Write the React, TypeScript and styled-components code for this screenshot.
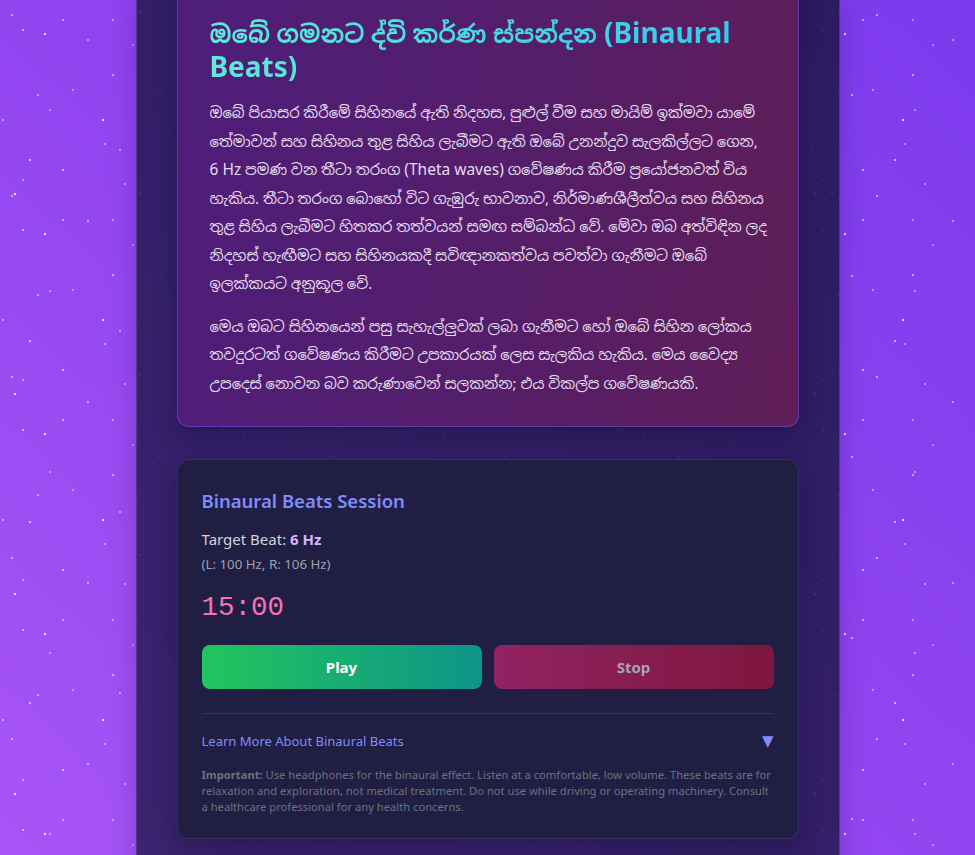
import React from "react";
import styled, { createGlobalStyle } from "styled-components";

const starLayer = (pts: [number, number, number][]) =>
  pts
    .map(
      ([x, y, a]) =>
        `radial-gradient(circle at ${x}px ${y}px, rgba(255,255,255,${a}) 0, rgba(255,255,255,${a}) 1px, transparent 1.6px)`
    )
    .join(",");

const tileA: [number, number, number][] = [
  [23, 30, 0.55], [45, 34, 0.8], [63, 20, 0.5], [113, 20, 0.4], [133, 45, 0.35],
  [113, 75, 0.5], [73, 90, 0.4], [38, 95, 0.5], [3, 120, 0.45], [103, 120, 0.85],
  [105, 144, 0.4], [63, 170, 0.6], [23, 180, 0.45], [125, 184, 0.4], [15, 194, 0.85],
];
const tileB: [number, number, number][] = [
  [12, 15, 0.5], [88, 40, 0.45], [140, 12, 0.7], [50, 110, 0.4], [160, 95, 0.55],
  [120, 150, 0.45], [30, 160, 0.6],
];

const Global = createGlobalStyle`
  html, body { margin: 0; padding: 0; }
  body {
    font-family: "Noto Sans", "Noto Sans Sinhala", "Iskoola Pota", "Open Sans", sans-serif;
    background-color: #8b45ee;
  }
  * { box-sizing: border-box; }
`;

const Page = styled.div`
  min-height: 100vh;
  display: flex;
  justify-content: center;
  overflow: hidden;
  background-image: ${starLayer(tileA)}, ${starLayer(tileB)},
    linear-gradient(to top right, #a855f7 0%, #9346f0 45%, #7c3aed 100%);
  background-size: ${tileA.map(() => "200px 200px").join(",")},
    ${tileB.map(() => "173px 181px").join(",")}, 100% 100%;
`;

const Column = styled.main`
  width: 704px;
  flex: none;
  background: linear-gradient(to top right, rgba(36, 26, 80, 0.82), rgba(30, 22, 75, 0.86));
  border-left: 1px solid rgba(167, 139, 250, 0.25);
  border-right: 1px solid rgba(167, 139, 250, 0.25);
  box-shadow: 0 0 24px rgba(40, 10, 90, 0.25);
  padding: 0 40px 40px;
  display: flex;
  flex-direction: column;
  gap: 32px;
`;

const InfoCard = styled.section`
  margin-top: -17px;
  padding: 32px 10px 29px 32px;
  border-radius: 12px;
  border: 1px solid rgba(99, 102, 241, 0.45);
  background: linear-gradient(100deg, rgba(80, 30, 125, 0.92) 0%, rgba(88, 30, 105, 0.92) 55%, rgba(100, 30, 85, 0.92) 100%);
  box-shadow: 0 10px 25px rgba(10, 5, 30, 0.3);
`;

const Title = styled.h2`
  margin: 0 0 15px;
  font-size: 28px;
  line-height: 33px;
  font-weight: 700;
  background: linear-gradient(to right, #5eead4, #2fc6f0);
  -webkit-background-clip: text;
  background-clip: text;
  color: transparent;
`;

const Si = styled.span<{ $size: number }>`
  font-size: ${(p) => p.$size}px;
`;

const Para = styled.p`
  margin: 0 0 14px;
  font-size: 14.8px;
  line-height: 28.5px;
  color: #e3dcef;
  white-space: nowrap;
  &:last-child { margin-bottom: 0; }
`;

const Lat = styled.span`
  font-size: 15.5px;
`;

const SessionCard = styled.section`
  padding: 27px 24px 23px;
  border-radius: 12px;
  border: 1px solid rgba(139, 92, 246, 0.22);
  background: #201e43;
  box-shadow: 0 10px 25px rgba(10, 5, 30, 0.3);
  display: flex;
  flex-direction: column;
`;

const SessionTitle = styled.h3`
  margin: 0 0 12px;
  font-size: 18.5px;
  line-height: 28px;
  font-weight: 600;
  color: #818cf8;
`;

const Target = styled.div`
  font-size: 15px;
  line-height: 24px;
  color: #d1d5db;
  b { color: #d8b4fe; font-weight: 700; }
`;

const Freqs = styled.div`
  margin-top: 3px;
  font-size: 13.3px;
  line-height: 20px;
  color: #9ca3af;
`;

const Timer = styled.div`
  margin-top: 16px;
  font-family: "Liberation Mono", "DejaVu Sans Mono", monospace;
  font-size: 27.5px;
  line-height: 36px;
  color: #f472b6;
`;

const Buttons = styled.div`
  margin-top: 19px;
  display: grid;
  grid-template-columns: 1fr 1fr;
  gap: 12px;
`;

const Btn = styled.button<{ $variant: "play" | "stop"; $disabled?: boolean }>`
  height: 44px;
  border: none;
  border-radius: 8px;
  font-family: inherit;
  font-size: 15px;
  font-weight: 700;
  color: #fff;
  cursor: pointer;
  opacity: ${(p) => (p.$disabled ? 0.6 : 1)};
  background: ${(p) =>
    p.$variant === "play"
      ? "linear-gradient(to right, #22c55e, #0d9488)"
      : "linear-gradient(to right, #db2777, #be123c)"};
`;

const Divider = styled.hr`
  margin: 24px 0 0;
  border: none;
  border-top: 1px solid rgba(75, 85, 99, 0.45);
`;

const Learn = styled.div`
  margin-top: 15px;
  display: flex;
  justify-content: space-between;
  align-items: center;
  font-size: 13px;
  line-height: 24px;
  color: #818cf8;
  cursor: pointer;
`;

const Arrow = styled.span`
  font-size: 15px;
  color: #818cf8;
  font-family: "DejaVu Sans", sans-serif;
`;

const Note = styled.p`
  margin: 14px 0 0;
  font-size: 11.2px;
  line-height: 16px;
  color: #6b7280;
  b { font-weight: 700; }
`;

export default function App() {
  return (
    <>
      <Global />
      <Page>
        <Column>
          <InfoCard>
            <Title>
              <Si $size={24.4}>ඔබේ ගමනට ද්වි කර්ණ ස්පන්දන</Si> (Binaural Beats)
            </Title>
            <Para>
              ඔබේ පියාසර කිරීමේ සිහිනයේ ඇති නිදහස, පුළුල් වීම සහ මායිම් ඉක්මවා යාමේ
              <br />
              තේමාවන් සහ සිහිනය තුළ සිහිය ලැබීමට ඇති ඔබේ උනන්දුව සැලකිල්ලට ගෙන,
              <br />
              <Lat>6 Hz</Lat> පමණ වන තීටා තරංග <Lat>(Theta waves)</Lat> ගවේෂණය කිරීම ප්‍රයෝජනවත් විය
              <br />
              හැකිය. තීටා තරංග බොහෝ විට ගැඹුරු භාවනාව, නිර්මාණශීලීත්වය සහ සිහිනය
              <br />
              තුළ සිහිය ලැබීමට හිතකර තත්වයන් සමඟ සම්බන්ධ වේ. මේවා ඔබ අත්විඳින ලද
              <br />
              නිදහස් හැඟීමට සහ සිහිනයකදී සවිඥානකත්වය පවත්වා ගැනීමට ඔබේ
              <br />
              ඉලක්කයට අනුකූල වේ.
            </Para>
            <Para>
              මෙය ඔබට සිහිනයෙන් පසු සැහැල්ලුවක් ලබා ගැනීමට හෝ ඔබේ සිහින ලෝකය
              <br />
              තවදුරටත් ගවේෂණය කිරීමට උපකාරයක් ලෙස සැලකිය හැකිය. මෙය වෛද්‍ය
              <br />
              උපදෙස් නොවන බව කරුණාවෙන් සලකන්න; එය විකල්ප ගවේෂණයකි.
            </Para>
          </InfoCard>

          <SessionCard>
            <SessionTitle>Binaural Beats Session</SessionTitle>
            <Target>
              Target Beat: <b>6 Hz</b>
            </Target>
            <Freqs>(L: 100 Hz, R: 106 Hz)</Freqs>
            <Timer>15:00</Timer>
            <Buttons>
              <Btn $variant="play">Play</Btn>
              <Btn $variant="stop" $disabled>
                Stop
              </Btn>
            </Buttons>
            <Divider />
            <Learn>
              <span>Learn More About Binaural Beats</span>
              <Arrow>▼</Arrow>
            </Learn>
            <Note>
              <b>Important:</b> Use headphones for the binaural effect. Listen at a comfortable, low
              volume. These beats are for relaxation and exploration, not medical treatment. Do not
              use while driving or operating machinery. Consult a healthcare professional for any
              health concerns.
            </Note>
          </SessionCard>
        </Column>
      </Page>
    </>
  );
}
